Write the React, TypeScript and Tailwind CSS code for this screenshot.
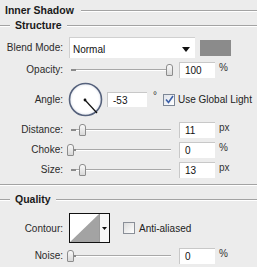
import React from "react";

const font = { fontFamily: '"Liberation Sans", Arial, sans-serif' };

function Rule() {
  return <div className="flex-1 h-[2px] border-t border-[#a3a3a3] border-b border-b-white" />;
}

function Field({ value, unit }: { value: string; unit: string }) {
  return (
    <div className="flex items-center ml-[8px]">
      <div className="w-[36px] h-[16px] bg-white border-t border-l border-[#c8c8c8] flex items-center pl-[5px] text-[10px] text-[#111]">
        {value}
      </div>
      <span className="ml-[4px] text-[10px] text-[#333] -mt-[4px]">{unit}</span>
    </div>
  );
}

function Slider({ pos }: { pos: number }) {
  return (
    <div className="relative w-[100px] h-[12px] flex items-center">
      <div className="w-full h-[2px] border-t border-[#a8a8a8] border-b border-b-white" />
      <div className="absolute left-0 top-[5px] w-[5px] h-[2px] bg-[#8a8a8a]" />
      <div
        className="absolute top-0 w-[7px] h-[12px] rounded-t-[3px] rounded-b-[1px] border border-[#8c8c8c] bg-gradient-to-b from-[#fafafa] to-[#d8d8d8]"
        style={{ left: pos }}
      />
    </div>
  );
}

function Label({ children }: { children: React.ReactNode }) {
  return <div className="w-[64px] shrink-0 text-right text-[10px] text-[#2a2a2a] pr-[1px]">{children}</div>;
}

function SliderRow({ label, pos, value, unit, mt = "mt-[5px]" }: { label: string; pos: number; value: string; unit: string; mt?: string }) {
  return (
    <div className={`flex items-center h-[15px] ${mt}`}>
      <Label>{label}</Label>
      <div className="ml-[7px]">
        <Slider pos={pos} />
      </div>
      <Field value={value} unit={unit} />
    </div>
  );
}

export default function App() {
  return (
    <div className="w-[257px] h-[267px] bg-[#ececec] overflow-hidden flex flex-col" style={font}>
      <div className="flex items-center h-[22px] pl-[5px]">
        <span className="text-[10.5px] font-bold text-[#1a1a1a] mr-[7px]">Inner Shadow</span>
        <Rule />
      </div>
      <div className="flex items-center h-[8px]">
        <div className="w-[10px] h-[2px] border-t border-[#a3a3a3] border-b border-b-white" />
        <span className="text-[10.5px] font-bold text-[#1a1a1a] mx-[5px]">Structure</span>
        <Rule />
      </div>

      <div className="flex items-center h-[21px] mt-[7px]">
        <Label>Blend Mode:</Label>
        <div className="ml-[5px] w-[126px] h-[21px] bg-white border-t border-l border-[#d0d0d0] flex items-center justify-between pl-[3px] pr-[5px]">
          <span className="text-[10px] text-[#111] mt-[2px]">Normal</span>
          <svg width="8" height="5" viewBox="0 0 8 5" className="mt-[2px]">
            <path d="M0 0H8L4 5Z" fill="#111" />
          </svg>
        </div>
        <div className="ml-[5px] w-[31px] h-[16px] bg-[#8b8b8b]" />
      </div>

      <SliderRow label="Opacity:" pos={95} value="100" unit="%" mt="mt-[4px]" />

      <div className="flex items-center h-[35px] mt-[5px]">
        <Label>Angle:</Label>
        <svg width="35" height="35" viewBox="0 0 35 35" className="ml-[4px]">
          <defs>
            <radialGradient id="g" cx="0.5" cy="0.5" r="0.5">
              <stop offset="0.8" stopColor="#ffffff" />
              <stop offset="1" stopColor="#e6e9f0" />
            </radialGradient>
          </defs>
          <circle cx="17.5" cy="17.5" r="16" fill="url(#g)" stroke="#56627c" strokeWidth="1.6" />
          <line x1="17" y1="18" x2="29" y2="31" stroke="#111" strokeWidth="1.2" />
          <circle cx="17" cy="18" r="1.4" fill="#111" />
        </svg>
        <div className="ml-[4px] w-[40px] h-[15px] bg-white border-t border-l border-[#c8c8c8] flex items-center pl-[5px] text-[10px] text-[#111]">
          -53
        </div>
        <span className="ml-[6px] text-[10px] text-[#333] -mt-[8px]">°</span>
        <div className="ml-[6px] w-[12px] h-[12px] border border-[#7d8796] bg-gradient-to-br from-[#dfe3ea] to-[#ffffff] flex items-center justify-center">
          <svg width="9" height="9" viewBox="0 0 9 9">
            <path d="M1 4.5L3.5 7.5L8 1" fill="none" stroke="#3b5fa8" strokeWidth="1.6" />
          </svg>
        </div>
        <span className="ml-[3px] text-[10px] text-[#222]">Use Global Light</span>
      </div>

      <SliderRow label="Distance:" pos={8} value="11" unit="px" />
      <SliderRow label="Choke:" pos={-4} value="0" unit="%" />
      <SliderRow label="Size:" pos={8} value="13" unit="px" />

      <div className="mt-[7px] h-[2px] border-t border-[#a3a3a3] border-b border-b-white" />

      <div className="flex items-center h-[10px] mt-[9px]">
        <div className="w-[10px] h-[2px] border-t border-[#a3a3a3] border-b border-b-white" />
        <span className="text-[10.5px] font-bold text-[#1a1a1a] mx-[5px]">Quality</span>
        <Rule />
      </div>

      <div className="flex items-center h-[30px] mt-[8px]">
        <Label>Contour:</Label>
        <div className="ml-[5px] w-[41px] h-[30px] border border-[#111] flex">
          <svg width="29" height="28" viewBox="0 0 29 28" className="shrink-0">
            <rect width="29" height="28" fill="#fff" />
            <path d="M0 28L29 0V28Z" fill="#a3a3a3" />
          </svg>
          <div className="flex-1 border-l border-[#999] bg-[#f7f7f7] flex items-center justify-center">
            <svg width="5" height="3" viewBox="0 0 5 3">
              <path d="M0 0H5L2.5 3Z" fill="#111" />
            </svg>
          </div>
        </div>
        <div className="ml-[13px] w-[12px] h-[12px] border border-[#8a8f98] bg-gradient-to-br from-[#dcdcdc] to-[#ffffff]" />
        <span className="ml-[4px] text-[10px] text-[#222]">Anti-aliased</span>
      </div>

      <SliderRow label="Noise:" pos={-4} value="0" unit="%" />
    </div>
  );
}
